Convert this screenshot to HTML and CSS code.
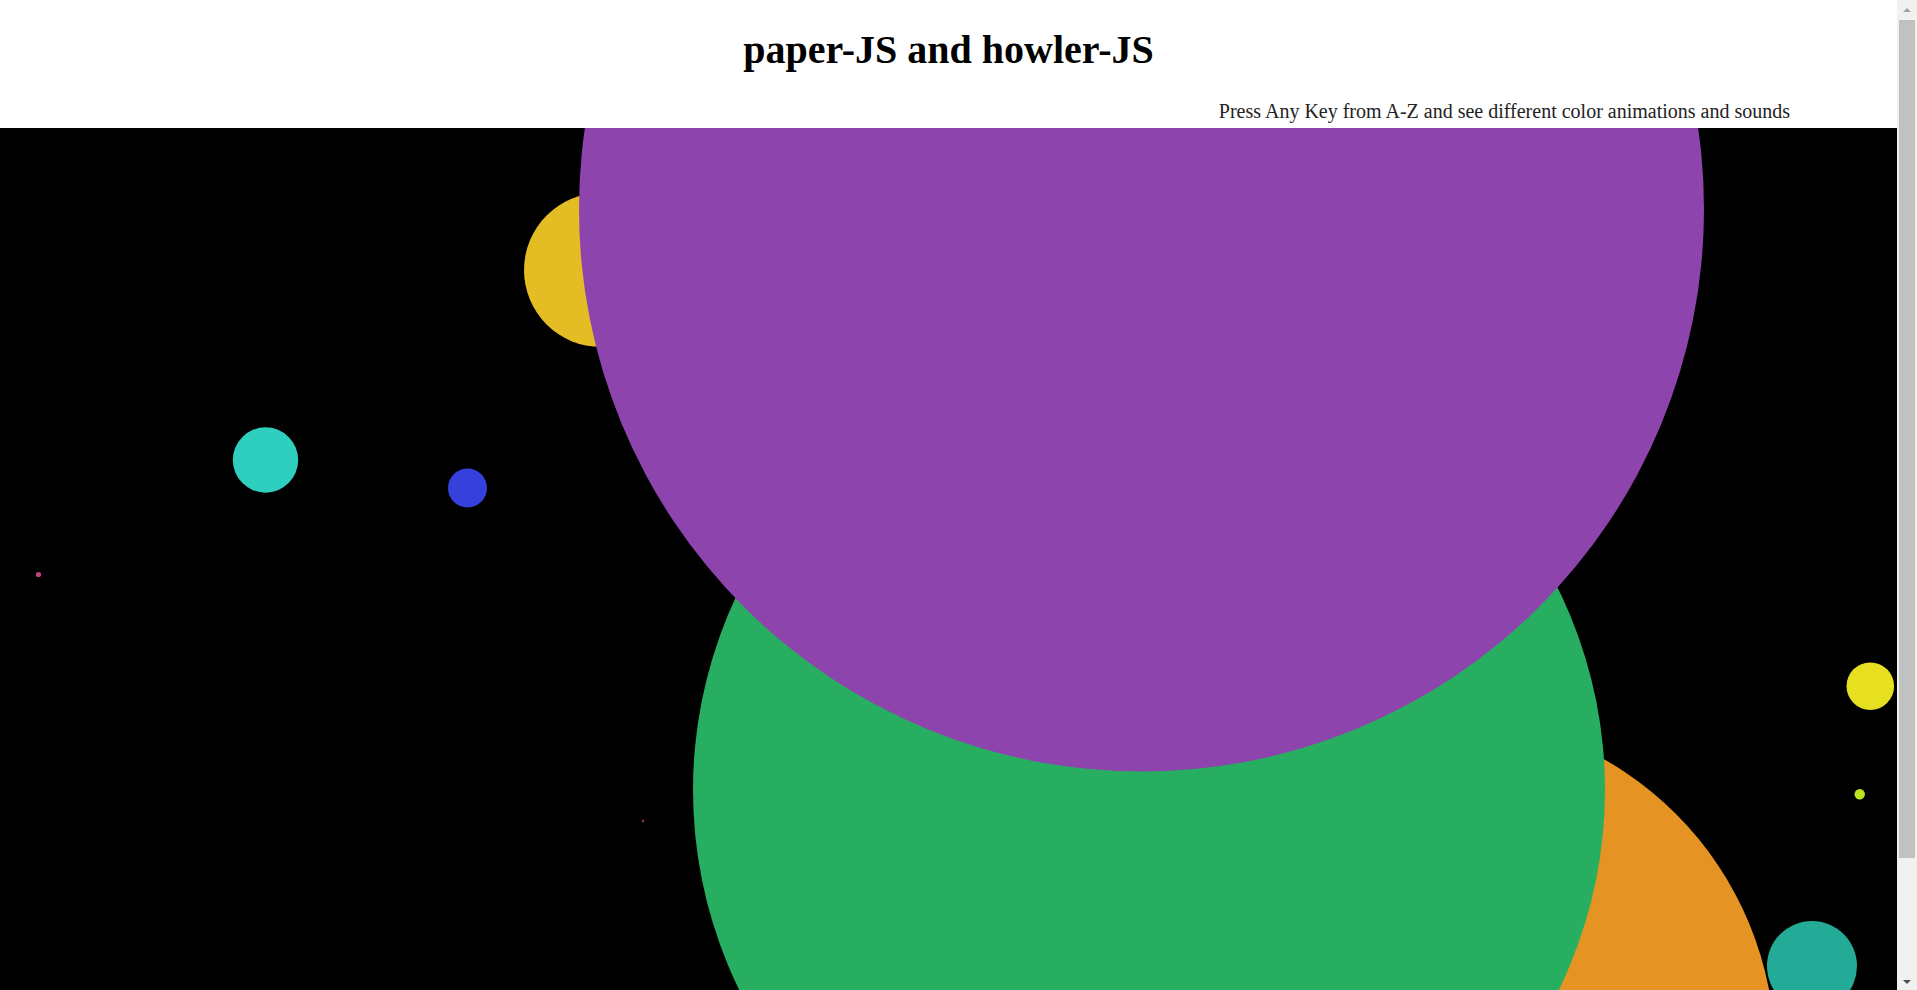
FILE: index.html
```html
<!DOCTYPE html>
<html lang="en">
<head>
    <meta charset="UTF-8">
    <meta name="viewport" content="width=device-width, initial-scale=1.0">
    <title>paper-JS and howler-JS</title>
    <link rel="stylesheet" href="styles.css">
</head>
<body>
    <div class="page">
        <div class="header">
            <h1>paper-JS and howler-JS</h1>
            <p class="hint">Press Any Key from A-Z and see different color animations and sounds</p>
        </div>

        <svg class="stage" id="myCanvas">
            <circle cx="601" cy="142" r="77" fill="#e3bd23"/>
            <circle cx="1437" cy="925" r="338" fill="#e59322"/>
            <circle cx="1149" cy="662" r="456" fill="#27ae60"/>
            <circle cx="1141.5" cy="81" r="562.5" fill="#8e44ad"/>
            <circle cx="265.5" cy="332" r="32.7" fill="#2ecfbf"/>
            <circle cx="467.5" cy="360" r="19.5" fill="#3640dc"/>
            <circle cx="38.5" cy="446.5" r="2.6" fill="#c2437e"/>
            <circle cx="643" cy="693" r="1.2" fill="#a0304a"/>
            <circle cx="1870.3" cy="558.2" r="23.8" fill="#e6e021"/>
            <circle cx="1859.7" cy="666.3" r="5.2" fill="#bde31e"/>
            <circle cx="1812" cy="838" r="45" fill="#24ab98"/>
        </svg>
    </div>

    <div class="scrollbar">
        <div class="scroll-btn up"></div>
        <div class="scroll-track">
            <div class="scroll-thumb"></div>
        </div>
        <div class="scroll-btn down"></div>
    </div>
</body>
</html>
```

FILE: styles.css
```css
body {
    font-family: "Liberation Serif", "Times New Roman", serif;
    margin: 0;
    padding: 0;
    background-color: #ffffff;
    display: flex;
    height: 100vh;
    overflow: hidden;
}

.page {
    flex: 1;
    display: flex;
    flex-direction: column;
    min-width: 0;
}

.header {
    height: 128px;
    padding-top: 27px;
    box-sizing: border-box;
}

h1 {
    text-align: center;
    font-size: 40px;
    color: #000;
    margin: 0 0 27px;
    line-height: 46px;
}

.hint {
    margin: 0;
    font-size: 20px;
    line-height: 23px;
    text-align: right;
    padding-right: 107px;
    color: #222;
}

.stage {
    display: block;
    width: 100%;
    flex: 1;
    background-color: #000;
}

/* fake browser scrollbar */
.scrollbar {
    width: 20px;
    flex-shrink: 0;
    display: flex;
    flex-direction: column;
    background-color: #f1f1f1;
}

.scroll-btn {
    height: 17px;
    display: flex;
    justify-content: center;
    align-items: center;
}

.scroll-btn::before {
    content: "";
    width: 0;
    height: 0;
    border-left: 4px solid transparent;
    border-right: 4px solid transparent;
}

.up::before {
    border-bottom: 4px solid #a3a3a3;
    margin-top: 2px;
}

.down::before {
    border-top: 4px solid #505050;
}

.scroll-track {
    flex: 1;
    padding: 3px 2px 0;
}

.scroll-thumb {
    height: 838px;
    background-color: #c1c1c1;
}
```
